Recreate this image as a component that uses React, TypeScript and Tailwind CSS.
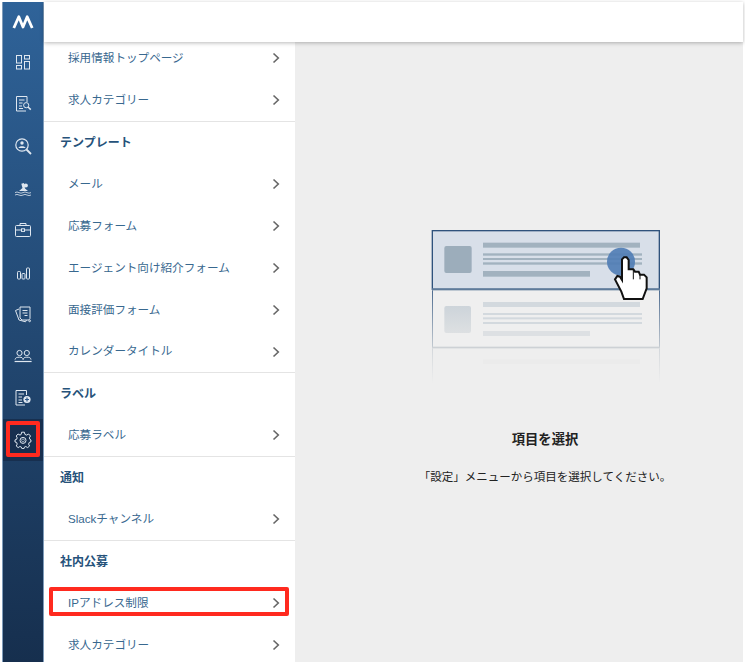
import React from "react";

const Chevron = () => (
  <svg width="8" height="12" viewBox="0 0 8 12" fill="none" className="shrink-0">
    <path d="M1.5 1.5 L6.3 6 L1.5 10.5" stroke="#666" strokeWidth="1.6" />
  </svg>
);

const Row = ({ label, short }: { label: string; short?: boolean }) => (
  <div
    className={`flex items-center justify-between pl-[24px] pr-[15px] text-[11.6px] text-[#38688f] ${
      short ? "h-[41px]" : "h-[42px]"
    }`}
  >
    <span className="mb-[1px]">{label}</span>
    <Chevron />
  </div>
);

const Heading = ({ label }: { label: string }) => (
  <div className="flex h-[41px] items-center pl-[16px] text-[12px] font-bold text-[#26527a]">
    {label}
  </div>
);

const Icon = ({ children }: { children: React.ReactNode }) => (
  <svg width="18" height="18" viewBox="0 0 18 18" fill="none" stroke="#dfe7f0" strokeWidth="1">
    {children}
  </svg>
);

const icons: React.ReactNode[] = [
  <>
    <rect x="2.5" y="2.5" width="5" height="7.5" />
    <rect x="2.5" y="12.5" width="5" height="3.5" />
    <rect x="10.5" y="2.5" width="5" height="3.5" />
    <rect x="10.5" y="8.5" width="5" height="7.5" />
  </>,
  <>
    <path d="M13 7 V1.5 H2.5 V16 H12" />
    <path d="M5 5 H10.5 M5 8 H8.5 M5 11 H8 M5 13.5 H9" />
    <circle cx="12.2" cy="10.2" r="2.6" />
    <path d="M14 12 L16.8 14.6" strokeWidth="1.5" />
  </>,
  <>
    <circle cx="8" cy="8" r="6.2" strokeWidth="1.2" />
    <circle cx="8" cy="6" r="1.7" fill="#dfe7f0" stroke="none" />
    <path d="M4.4 11 C5 8.8 11 8.8 11.6 11 Z" fill="#dfe7f0" stroke="none" />
    <path d="M12.5 12.5 L17 17" strokeWidth="1.8" />
  </>,
  <>
    <circle cx="11.8" cy="6.5" r="2.1" fill="#dfe7f0" stroke="none" />
    <path d="M5 12 L8.5 9 L7.3 4.8 L10 4 L11 9.5 L14 12 Z" fill="#dfe7f0" stroke="none" />
    <path d="M1 13.6 Q3 12.4 5 13.6 T9 13.6 T13 13.6 T17 13.6 M1 16 Q3 14.8 5 16 T9 16 T13 16 T17 16" strokeWidth="0.8" />
  </>,
  <>
    <rect x="1.5" y="4.5" width="15" height="11" rx="1" />
    <path d="M6 4.5 V2.5 H12 V4.5 M1.5 9 H7 M11 9 H16.5" />
    <rect x="7.5" y="7.8" width="3" height="2.6" />
  </>,
  <>
    <rect x="3.5" y="8.5" width="3" height="7.5" rx="0.8" />
    <rect x="8" y="10.5" width="3" height="5.5" rx="0.8" />
    <rect x="12.5" y="5" width="3" height="11" rx="0.8" />
  </>,
  <>
    <path d="M6 2 H16 V13.5 L14.5 15 H8 L6 13 Z" />
    <path d="M8.5 5.5 H13.5 M8.5 8 H13.5 M10.5 10.5 H13.5" />
    <path d="M5 4 L1.5 5.5 L5 15 L11.5 16.8 L12.5 15" />
    <circle cx="15.6" cy="15.8" r="0.9" />
  </>,
  <>
    <circle cx="5.5" cy="6" r="2.6" />
    <circle cx="12.8" cy="6" r="2.6" />
    <path d="M1 12.6 C1.4 10.6 3 10.2 5.5 10.2 C8 10.2 8.8 11 9.1 12.6 C9.4 11 10.4 10.2 12.8 10.2 C15.2 10.2 16.8 10.6 17 12.6" />
    <path d="M0.6 14.5 H17.6" strokeWidth="1.2" />
  </>,
  <>
    <path d="M12.5 6 V1.5 H2 V16 H11" />
    <path d="M4.5 5 H10 M4.5 8 H8 M4.5 11 H8 M4.5 13.5 H8.5" />
    <circle cx="13" cy="10.5" r="3.6" fill="#dfe7f0" stroke="none" />
    <path d="M11 10.5 H15 M13 8.5 V12.5" stroke="#285485" strokeWidth="1.2" />
  </>,
  <>
    <path d="M7.6 1.2 H10.4 L10.9 3.4 L12.6 4.1 L14.6 3 L16.5 5 L15.3 6.9 L16 8.5 L17 9 L16.8 11 L15.3 11.4 L14.6 13.1 L15.6 15 L13.6 16.6 L11.8 15.5 L10.4 16.1 L10 17.6 H7.9 L7.4 16.1 L5.9 15.5 L4.2 16.6 L2.2 15 L3.2 13.1 L2.6 11.4 L1 11 V8.9 L2.6 8.4 L3.2 6.8 L2.2 5 L4.1 3 L6 4.1 L7.2 3.4 Z" strokeLinejoin="round" />
    <circle cx="9" cy="9.4" r="3" />
    <circle cx="9" cy="9.4" r="1.4" strokeWidth="0.6" />
  </>,
];

const Illustration = () => (
  <svg width="250" height="170" viewBox="0 0 750 510" className="block">
    <defs>
      <linearGradient id="fadeA" x1="0" y1="0" x2="0" y2="1">
        <stop offset="0" stopColor="#4d6b8f" />
        <stop offset="1" stopColor="#c3cad1" />
      </linearGradient>
      <linearGradient id="fadeB" x1="0" y1="0" x2="0" y2="1">
        <stop offset="0" stopColor="#d3d7db" />
        <stop offset="1" stopColor="#eeeeee" />
      </linearGradient>
      <linearGradient id="sq2" x1="0" y1="0" x2="0" y2="1">
        <stop offset="0" stopColor="#cdd4da" />
        <stop offset="1" stopColor="#dde0e2" />
      </linearGradient>
    </defs>
    <rect x="36" y="208" width="684" height="176" fill="#efefef" />
    <rect x="37" y="32" width="681" height="176" fill="#d8dfe9" stroke="#2f527c" strokeWidth="4" />
    <rect x="36" y="205" width="684" height="6" fill="#5f7b9a" />
    <rect x="36" y="211" width="3" height="171" fill="url(#fadeA)" />
    <rect x="717" y="211" width="3" height="171" fill="url(#fadeA)" />
    <rect x="36" y="380" width="684" height="5" fill="#cdd1d5" />
    <rect x="36" y="385" width="3" height="105" fill="url(#fadeB)" />
    <rect x="717" y="385" width="3" height="105" fill="url(#fadeB)" />

    <rect x="73" y="78" width="82" height="81" rx="6" fill="#9cadbb" />
    <g fill="#a2b2bf">
      <rect x="189" y="68" width="471" height="15" />
      <rect x="189" y="100" width="477" height="7" />
      <rect x="189" y="114" width="477" height="6" />
      <rect x="189" y="127" width="477" height="7" />
      <rect x="189" y="153" width="321" height="17" />
    </g>

    <rect x="73" y="258" width="80" height="81" rx="6" fill="url(#sq2)" />
    <g fill="#d3d9de">
      <rect x="189" y="246" width="471" height="15" />
      <rect x="189" y="279" width="477" height="6" />
      <rect x="189" y="292" width="477" height="6" />
      <rect x="189" y="306" width="477" height="6" />
      <rect x="189" y="333" width="321" height="15" fill="#dde0e3" />
    </g>
    <rect x="189" y="418" width="471" height="14" fill="#ebebeb" />

    <circle cx="603" cy="125" r="42" fill="#4f7cb5" fillOpacity="0.9" />
    <path
      d="M606 118 L612 112 L620 112 L626 120 L626 148 L640 148 L645 155 L656 155 L660 164 L672 164 L680 172 L680 205 L668 237 L612 237 L604 215 L585 178 L592 168 L600 170 L606 180 Z"
      fill="#ffffff"
      stroke="#111111"
      strokeWidth="6"
      strokeLinejoin="miter"
    />
    <path d="M640 150 V178 M660 165 V178" stroke="#111" strokeWidth="3" fill="none" />
  </svg>
);

export default function App() {
  return (
    <div
      className="relative h-[665px] w-[745px] overflow-hidden bg-white p-[2px]"
      style={{ fontFamily: '"Liberation Sans", "Noto Sans CJK JP", sans-serif' }}
    >
      <div className="flex h-[660px] w-[741px]">
        <aside className="flex w-[42px] shrink-0 flex-col border-x border-[#7f9cba] bg-gradient-to-b from-[#2f6399] to-[#162f4e]">
          <div className="flex h-[39px] shrink-0 items-center justify-center">
            <svg width="22" height="16" viewBox="0 0 22 16" fill="none">
              <path d="M1.8 14 L6.8 2.8 L11 13 L15.2 2.8 L20.2 14" stroke="#ffffff" strokeWidth="2.8" strokeLinejoin="round" />
            </svg>
          </div>
          {icons.map((ic, i) => (
            <div
              key={i}
              className={`flex h-[42px] shrink-0 items-center justify-center ${i === 9 ? "bg-[#172f4f]" : ""}`}
            >
              <Icon>{ic}</Icon>
            </div>
          ))}
        </aside>

        <div className="flex min-w-0 flex-1 flex-col">
          <header className="relative z-10 h-[40px] shrink-0 bg-white shadow-[0_1px_4px_rgba(0,0,0,0.28)]" />
          <div className="flex min-h-0 flex-1">
            <nav className="w-[251px] shrink-0 overflow-hidden bg-white">
              <div className="-mt-[5px]">
                <Row label="採用情報トップページ" />
                <Row label="求人カテゴリー" />
                <div className="border-t border-[#e4e4e4]">
                  <Heading label="テンプレート" />
                  <Row label="メール" />
                  <Row label="応募フォーム" />
                  <Row label="エージェント向け紹介フォーム" />
                  <Row label="面接評価フォーム" />
                  <Row label="カレンダータイトル" short />
                </div>
                <div className="border-t border-[#e4e4e4]">
                  <Heading label="ラベル" />
                  <Row label="応募ラベル" />
                </div>
                <div className="border-t border-[#e4e4e4]">
                  <Heading label="通知" />
                  <Row label="Slackチャンネル" />
                </div>
                <div className="border-t border-[#e4e4e4]">
                  <Heading label="社内公募" />
                  <Row label="IPアドレス制限" />
                  <Row label="求人カテゴリー" />
                </div>
              </div>
            </nav>
            <main className="flex flex-1 flex-col items-center bg-[#eeeeee] pl-[52px] pt-[178px]">
              <Illustration />
              <h2 className="mt-[41px] text-[13.3px] font-bold leading-[18px] text-[#222222]">項目を選択</h2>
              <p className="mt-[19px] text-[11.5px] leading-[18px] text-[#222222]">
                「設定」メニューから項目を選択してください。
              </p>
            </main>
          </div>
        </div>
      </div>
      <div className="absolute left-[6px] top-[421px] h-[36px] w-[34px] rounded-[2px] border-[4px] border-[#ff2a1f]" />
      <div className="absolute left-[49px] top-[587px] h-[29px] w-[240px] rounded-[2px] border-[4px] border-[#ff2a1f]" />
    </div>
  );
}
